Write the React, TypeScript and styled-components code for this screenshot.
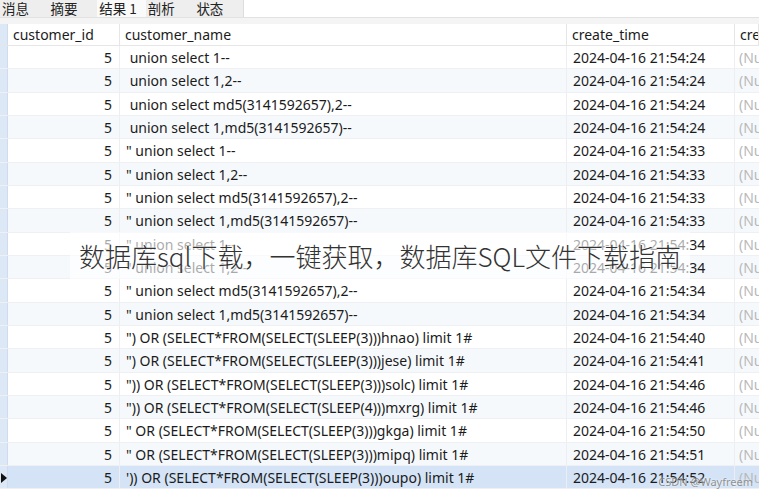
import styled, { createGlobalStyle } from 'styled-components';

const GlobalStyle = createGlobalStyle`
	html, body {
		margin: 0;
		padding: 0;
		background: #ffffff;
	}
	body {
		font-family: 'Noto Sans', 'Noto Sans CJK SC', sans-serif;
		color: #1b1b1b;
		overflow: hidden;
	}
`;

const tabs = ['消息', '摘要', '结果 1', '剖析', '状态'];

const rows: [string, string][] = [
	[' union select 1--', '21:54:24'],
	[' union select 1,2--', '21:54:24'],
	[' union select md5(3141592657),2--', '21:54:24'],
	[' union select 1,md5(3141592657)--', '21:54:24'],
	['" union select 1--', '21:54:33'],
	['" union select 1,2--', '21:54:33'],
	['" union select md5(3141592657),2--', '21:54:33'],
	['" union select 1,md5(3141592657)--', '21:54:33'],
	['" union select 1--', '21:54:34'],
	['" union select 1,2--', '21:54:34'],
	['" union select md5(3141592657),2--', '21:54:34'],
	['" union select 1,md5(3141592657)--', '21:54:34'],
	['") OR (SELECT*FROM(SELECT(SLEEP(3)))hnao) limit 1#', '21:54:40'],
	['") OR (SELECT*FROM(SELECT(SLEEP(3)))jese) limit 1#', '21:54:41'],
	['")) OR (SELECT*FROM(SELECT(SLEEP(3)))solc) limit 1#', '21:54:46'],
	['")) OR (SELECT*FROM(SELECT(SLEEP(4)))mxrg) limit 1#', '21:54:46'],
	['" OR (SELECT*FROM(SELECT(SLEEP(3)))gkga) limit 1#', '21:54:50'],
	['" OR (SELECT*FROM(SELECT(SLEEP(3)))mipq) limit 1#', '21:54:51'],
	["')) OR (SELECT*FROM(SELECT(SLEEP(3)))oupo) limit 1#", '21:54:52'],
];

export default function App() {
	return (
		<>
			<GlobalStyle />
			<Page>
				<TabBar>
					<TabGroup>
						{tabs.map((tab) => (
							<Tab key={tab} $active={tab === '结果 1'}>
								{tab}
							</Tab>
						))}
					</TabGroup>
					<TabFiller />
				</TabBar>
				<Spacer />
				<Grid>
					<HeaderRow>
						<Gutter />
						<HeadCell>customer_id</HeadCell>
						<HeadCell>customer_name</HeadCell>
						<HeadCell>create_time</HeadCell>
						<HeadCell>cre</HeadCell>
					</HeaderRow>
					{rows.map(([name, time], index) => {
						const selected = index === rows.length - 1;
						return (
							<DataRow key={index} $alt={index % 2 === 1} $selected={selected}>
								<Gutter>{selected && <Arrow />}</Gutter>
								<IdCell>5</IdCell>
								<Cell>{name}</Cell>
								<Cell>2024-04-16 {time}</Cell>
								<NullCell>(Null)</NullCell>
							</DataRow>
						);
					})}
				</Grid>
				<Banner>数据库sql下载，一键获取，数据库SQL文件下载指南</Banner>
				<Watermark>CSDN @Wayfreem</Watermark>
			</Page>
		</>
	);
}

const Page = styled.div`
	position: relative;
	width: 759px;
	height: 490px;
	overflow: hidden;
	background: #ffffff;
`;

const TabBar = styled.div`
	display: flex;
	height: 17px;
	border-bottom: 1px solid #e2e2e2;
`;

const TabGroup = styled.div`
	display: flex;
	width: 243px;
	background: #eeeeee;
	border-right: 1px solid #dddddd;
`;

const Tab = styled.div<{ $active?: boolean }>`
	width: 49.5px;
	height: 17px;
	padding-left: 2px;
	box-sizing: border-box;
	font-family: 'Noto Sans CJK SC', 'Noto Sans', sans-serif;
	font-size: 13.5px;
	line-height: 17px;
	color: #222;
	background: ${({ $active }) => ($active ? '#fafafa' : 'transparent')};
`;

const TabFiller = styled.div`
	flex: 1;
	background: #ffffff;
`;

const Spacer = styled.div`
	height: 6px;
	background: #f4f4f4;
`;

const Grid = styled.div`
	display: flex;
	flex-direction: column;
`;

const rowColumns = '8px 112px 447px 168px 1fr';

const HeaderRow = styled.div`
	display: grid;
	grid-template-columns: ${rowColumns};
	height: 22px;
	background: #ffffff;
	border-bottom: 1px solid #e6e6e6;
	box-sizing: border-box;
`;

const DataRow = styled.div<{ $alt: boolean; $selected: boolean }>`
	display: grid;
	grid-template-columns: ${rowColumns};
	height: 23.33px;
	box-sizing: border-box;
	border-bottom: 1px solid #eef0f3;
	background: ${({ $alt, $selected }) =>
		$selected ? '#d4e4f6' : $alt ? '#f6f9fc' : '#ffffff'};
`;

const Gutter = styled.div`
	position: relative;
	background: #dce8f6;
	border-right: 1px solid #cfdcec;
`;

const Arrow = styled.span`
	position: absolute;
	left: 1px;
	top: 7px;
	width: 0;
	height: 0;
	border-top: 5px solid transparent;
	border-bottom: 5px solid transparent;
	border-left: 6px solid #111;
`;

const HeadCell = styled.div`
	padding-left: 5px;
	font-size: 14px;
	line-height: 22px;
	color: #1b1b1b;
	border-right: 1px solid #e6e6e6;
	white-space: nowrap;
	overflow: hidden;
`;

const Cell = styled.div`
	padding-left: 6px;
	font-size: 14px;
	line-height: 23px;
	white-space: pre;
	overflow: hidden;
	border-right: 1px solid #eceef1;
`;

const IdCell = styled(Cell)`
	padding: 0 7px 0 0;
	text-align: right;
`;

const NullCell = styled(Cell)`
	padding-left: 4px;
	color: #b9b9b9;
	border-right: none;
`;

const Banner = styled.div`
	position: absolute;
	left: 70px;
	top: 232px;
	width: 620px;
	height: 47px;
	display: flex;
	align-items: center;
	justify-content: center;
	background: rgba(255, 255, 255, 0.62);
	font-family: 'Noto Sans CJK SC', 'Noto Sans', sans-serif;
	font-size: 26px;
	font-weight: 300;
	color: #333333;
	white-space: nowrap;
	text-shadow: 0 0 2px #fff, 0 0 2px #fff;
`;

const Watermark = styled.div`
	position: absolute;
	right: 6px;
	bottom: 1px;
	font-size: 11px;
	color: rgba(110, 110, 110, 0.75);
	text-shadow: 0 0 2px #fff;
`;
